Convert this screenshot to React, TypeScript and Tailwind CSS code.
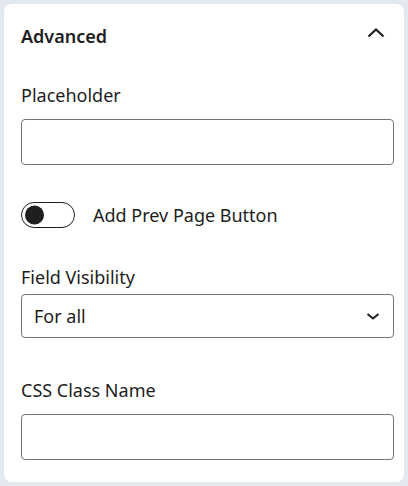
import { useState } from 'react';

function ChevronUp() {
  return (
    <svg className="w-6 h-6 mr-[6px]" viewBox="0 0 24 24" fill="none" stroke="#1e1e1e" strokeWidth={2.2}>
      <path d="M4.5 12.5l7.5-7 7.5 7" />
    </svg>
  );
}

function ChevronDown() {
  return (
    <svg className="w-[16px] h-[16px]" viewBox="0 0 16 16" fill="none" stroke="#1e1e1e" strokeWidth={2}>
      <path d="M2.5 6l5.5 4.5 5.5-4.5" />
    </svg>
  );
}

export default function App() {
  const [prevButton, setPrevButton] = useState(false);

  return (
    <div className="min-h-screen bg-[#e4e9f0] p-1" style={{ fontFamily: '"Noto Sans", "Open Sans", sans-serif' }}>
      <div className="bg-white rounded-lg pl-[17px] pr-[10px] pt-[20px] pb-[22px] text-[#1e1e1e]">
        {/* panel header */}
        <div className="flex items-center justify-between h-6">
          <h2 className="text-[18px] font-semibold leading-6">Advanced</h2>
          <ChevronUp />
        </div>

        <label className="block mt-[35px] text-[18px] leading-6">Placeholder</label>
        <input className="block w-full mt-3 h-[46px] border border-[#757575] rounded-[4px] px-3 outline-none" />

        {/* toggle */}
        <div className="flex items-center gap-[18px] mt-[37px] h-[26px]">
          <button
            onClick={() => setPrevButton(!prevButton)}
            className={`relative w-[54px] h-[26px] rounded-full border-[1.5px] border-[#1e1e1e] ${prevButton ? 'bg-[#1e1e1e]' : 'bg-white'}`}
          >
            <span
              className={`absolute top-1/2 -translate-y-1/2 w-[19px] h-[19px] rounded-full ${prevButton ? 'right-[3px] bg-white' : 'left-[3px] bg-[#1e1e1e]'}`}
            />
          </button>
          <span className="text-[18px] leading-6">Add Prev Page Button</span>
        </div>

        <label className="block mt-[37px] text-[18px] leading-6">Field Visibility</label>
        <div className="flex items-center justify-between mt-[5px] h-[44px] border border-[#757575] rounded-[4px] pl-3 pr-[12px]">
          <span className="text-[18px]">For all</span>
          <ChevronDown />
        </div>

        <label className="block mt-[40px] text-[18px] leading-6">CSS Class Name</label>
        <input className="block w-full mt-3 h-[46px] border border-[#757575] rounded-[4px] px-3 outline-none" />
      </div>
    </div>
  );
}
